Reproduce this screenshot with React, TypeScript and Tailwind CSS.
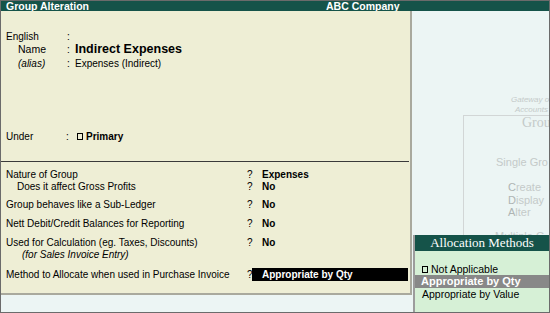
export default function App() {
  const rows = [
    { label: 'Nature of Group', value: 'Expenses', indent: false, gap: '' },
    { label: 'Does it affect Gross Profits', value: 'No', indent: true, gap: '' },
    { label: 'Group behaves like a Sub-Ledger', value: 'No', indent: false, gap: 'mt-[6px]' },
    { label: 'Nett Debit/Credit Balances for Reporting', value: 'No', indent: false, gap: 'mt-[7px]' },
    { label: 'Used for Calculation (eg. Taxes, Discounts)', value: 'No', indent: false, gap: 'mt-[7px]' },
  ]

  return (
    <div className="w-[550px] h-[313px] border border-[#6b6b6b] flex flex-col overflow-hidden font-['Liberation_Sans',Arial,sans-serif] text-[10px] text-black">
      <div className="h-[10px] shrink-0 bg-[#155349] flex items-center text-white font-bold text-[10.5px] leading-[10px]">
        <span className="pl-[5px] w-[325px]">Group Alteration</span>
        <span>ABC Company</span>
      </div>

      <div className="flex flex-1 min-h-0">
        {/* main form */}
        <div className="w-[411px] flex flex-col">
          <div className="flex-1 flex flex-col bg-[#eeeed5] border-r-2 border-b-2 border-[#a9a99d]">
            <div className="pt-[19px] pl-[5px]">
              <div className="flex h-[13px] leading-[13px]">
                <span className="w-[61px]">English</span>
                <span className="w-[8px]">:</span>
              </div>
              <div className="flex h-[13px] leading-[13px] items-center">
                <span className="w-[61px] pl-[12px] text-[10.5px]">Name</span>
                <span className="w-[8px]">:</span>
                <span className="font-bold text-[12.5px]">Indirect Expenses</span>
              </div>
              <div className="flex h-[13px] leading-[13px] mt-px">
                <span className="w-[61px] pl-[12px] italic">(alias)</span>
                <span className="w-[8px]">:</span>
                <span>Expenses (Indirect)</span>
              </div>
              <div className="flex h-[13px] leading-[13px] items-center mt-[60px]">
                <span className="w-[60px]">Under</span>
                <span className="w-[11px]">:</span>
                <span className="w-[6px] h-[7px] border border-black mr-[3px]" />
                <span className="font-bold">Primary</span>
              </div>
            </div>

            <div className="mt-[18px] h-px bg-[#3a3a3a] mr-px" />

            <div className="pt-[7px] pl-[5px]">
              {rows.map((r) => (
                <div key={r.label} className={`flex h-[12px] leading-[12px] ${r.gap}`}>
                  <span className={`w-[241px] ${r.indent ? 'pl-[11px]' : ''}`}>{r.label}</span>
                  <span className="w-[5px]">?</span>
                  <span className="pl-[10px] font-bold">{r.value}</span>
                </div>
              ))}
              <div className="h-[12px] leading-[12px] pl-[16px] italic">(for Sales Invoice Entry)</div>
              <div className="flex h-[13px] leading-[13px] mt-[7px]">
                <span className="w-[241px]">Method to Allocate when used in Purchase Invoice</span>
                <span className="w-[5px]">?</span>
                <span className="w-[156px] bg-black text-white font-bold pl-[10px]">Appropriate by Qty</span>
              </div>
            </div>
          </div>
          <div className="h-[17px] bg-[#ecf5f4]" />
        </div>

        {/* faded gateway window behind, allocation popup on top */}
        <div className="flex-1 relative bg-[#ecf5f4] overflow-hidden whitespace-nowrap text-[#c4cac9]">
          <div className="pt-[84px] italic text-[8px] leading-[10px]">
            <div className="ml-[99px]">Gateway of</div>
            <div className="ml-[103px]">Accounts</div>
          </div>
          <div className="ml-[51px] border-l border-t border-[#d2d6d6] h-[200px]">
            <div className="pl-[58px] font-['Liberation_Serif',serif] text-[14px] leading-[14px]">Grou</div>
            <div className="pl-[32px] mt-[26px] text-[11px] leading-[13px]">Single Gro</div>
            <div className="pl-[44px] mt-[12px] text-[11px] leading-[12.5px]">
              <div><span className="text-[#aeb4b3]">C</span>reate</div>
              <div><span className="text-[#aeb4b3]">D</span>isplay</div>
              <div><span className="text-[#aeb4b3]">A</span>lter</div>
            </div>
            <div className="pl-[31px] mt-[11px] text-[11px] leading-[13px]">Multiple G</div>
          </div>

          <div className="absolute left-px right-0 bottom-0 h-[77px] flex flex-col border-l-2 border-[#9c9c9c] bg-[#d6f0d6] text-black">
            <div className="h-[16px] bg-[#155349] text-white text-center font-['Liberation_Serif',serif] text-[13px] leading-[16px]">
              Allocation Methods
            </div>
            <div className="pt-[12px] text-[10.5px] leading-[13px]">
              <div className="flex items-center h-[12px] pl-[7px]">
                <span className="w-[6px] h-[7px] border border-black mr-[3px]" />
                <span>Not Applicable</span>
              </div>
              <div className="h-[13px] bg-[#888888] text-white font-bold text-[11px] pl-[6px]">Appropriate by Qty</div>
              <div className="h-[13px] pl-[7px]">Appropriate by Value</div>
            </div>
          </div>
        </div>
      </div>
    </div>
  )
}
